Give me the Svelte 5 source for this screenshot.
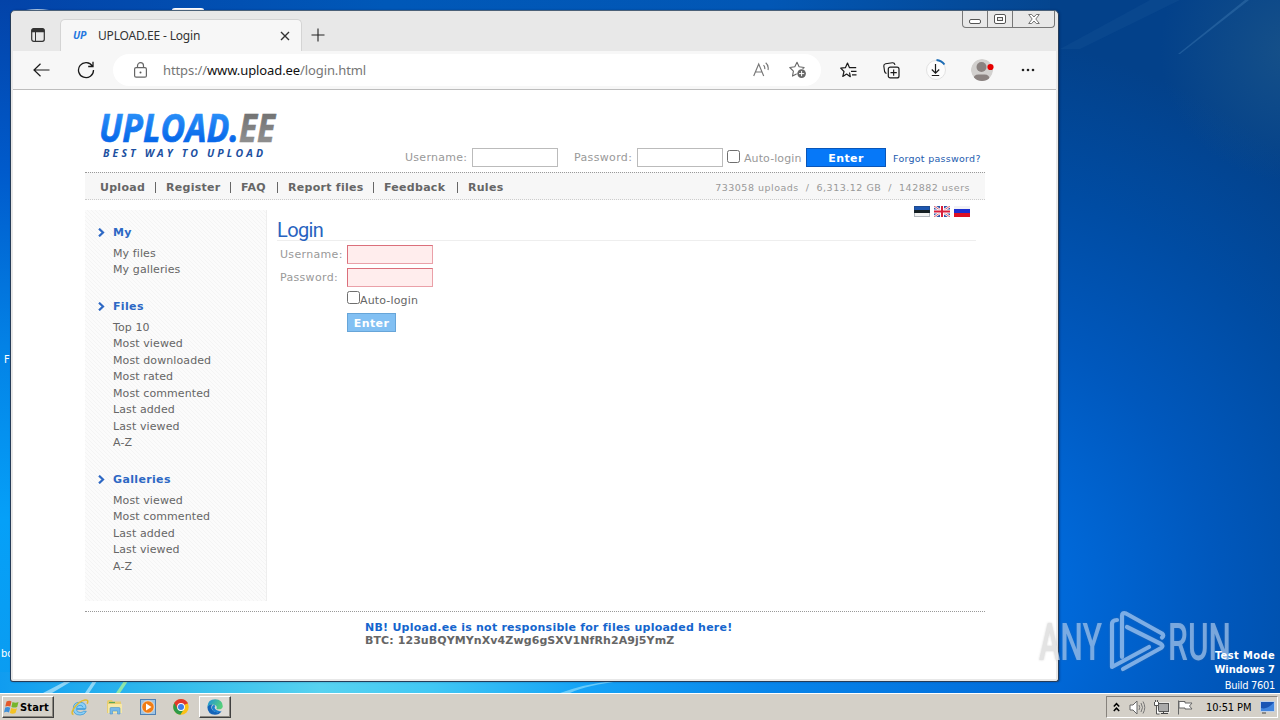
<script>
  const nav = [
    { label: 'Upload', w: 45 },
    { label: 'Register', w: 54 },
    { label: 'FAQ', w: 26 },
    { label: 'Report files', w: 75 },
    { label: 'Feedback', w: 63 },
    { label: 'Rules', w: 36 }
  ];
  const groups = [
    { title: 'My', items: ['My files', 'My galleries'] },
    {
      title: 'Files',
      items: ['Top 10', 'Most viewed', 'Most downloaded', 'Most rated', 'Most commented', 'Last added', 'Last viewed', 'A-Z']
    },
    { title: 'Galleries', items: ['Most viewed', 'Most commented', 'Last added', 'Last viewed', 'A-Z'] }
  ];
</script>

<div class="desktop">
  <svg class="wall" viewBox="0 0 1280 693" preserveAspectRatio="none">
    <defs>
      <linearGradient id="left" x1="0" y1="0" x2="0" y2="1">
        <stop offset="0" stop-color="#0343a8" /><stop offset=".25" stop-color="#005bcc" />
        <stop offset=".5" stop-color="#0382e6" /><stop offset=".75" stop-color="#05a0f8" /><stop offset="1" stop-color="#0b9cf0" />
      </linearGradient>
      <linearGradient id="top" x1="0" x2="1" y1="0" y2="0">
        <stop offset="0" stop-color="#0343a8" /><stop offset=".3" stop-color="#0058b8" />
        <stop offset=".6" stop-color="#0257b5" /><stop offset=".83" stop-color="#05458e" /><stop offset="1" stop-color="#114a85" />
      </linearGradient>
      <linearGradient id="bot" x1="0" x2="1" y1="0" y2="0">
        <stop offset="0" stop-color="#109cf0" /><stop offset=".17" stop-color="#35bdec" /><stop offset=".3" stop-color="#57d2f0" />
        <stop offset=".4" stop-color="#42c8f4" /><stop offset=".54" stop-color="#16a4f6" /><stop offset=".72" stop-color="#0885ea" />
        <stop offset="1" stop-color="#0068d8" />
      </linearGradient>
      <radialGradient id="right" gradientUnits="userSpaceOnUse" cx="930" cy="600" r="570">
        <stop offset="0" stop-color="#0078e4" /><stop offset=".25" stop-color="#0068d8" /><stop offset=".5" stop-color="#0058bd" />
        <stop offset=".75" stop-color="#004ca3" /><stop offset="1" stop-color="#03418a" />
      </radialGradient>
      <radialGradient id="haze" gradientUnits="userSpaceOnUse" cx="1290" cy="50" r="130">
        <stop offset="0" stop-color="#1c5588" stop-opacity=".75" /><stop offset="1" stop-color="#1c5588" stop-opacity="0" />
      </radialGradient>
    </defs>
    <rect width="1280" height="693" fill="url(#top)" />
    <rect width="20" height="693" fill="url(#left)" />
    <rect y="672" width="1070" height="21" fill="url(#bot)" />
    <rect x="1050" width="230" height="693" fill="url(#right)" />
    <rect x="1050" width="230" height="300" fill="url(#haze)" />
    <path d="M1178 54 1245 0h4l-69 54z" fill="#4b86bd" opacity=".35" />
    <path d="M1060 49 1150 0h30L1080 49z" fill="#4b86bd" opacity=".09" />
    <path d="M43 693 66 681h6L52 693zM85 693l8-12h4l-8 12z" fill="#d8f4fc" opacity=".6" />
    <path d="M116 693l8-12h4l-8 12z" fill="#9aeba0" opacity=".9" />
    <path d="M560 693q25-9 52-12h10q-35 4-52 12z" fill="#a0e4fb" opacity=".6" />
    <path d="M172 10q0-2 3-2h26q3 0 3 2z" fill="#fff" />
    <path d="M26 10q11-2 23 0z" fill="#b9d3ee" />
  </svg>
  <span class="dlabel d1">F</span>
  <span class="dlabel d2">bo</span>

  <div class="window">
    <div class="caption">
      <span><svg width="12" height="5"><rect x=".5" y=".5" width="11" height="4" rx="1.5" fill="#fff" stroke="#555" /></svg></span>
      <span><svg width="12" height="10"><rect x=".5" y=".5" width="11" height="9" rx="1.5" fill="#fff" stroke="#555" /><rect x="3.5" y="3.5" width="5" height="3" fill="#e8e8e8" stroke="#555" /></svg></span>
      <span class="wide"><svg width="12" height="10" viewBox="0 0 12 10"><path d="M.7.5h3L6 3 8.300.5h3L7.800 5l3.500 4.500h-3L6 7 3.700 9.500h-3L4.200 5z" fill="#fff" stroke="#666" stroke-width=".9" /></svg></span>
    </div>
    <div class="tabs">
      <svg class="tabicon" width="14" height="14" viewBox="0 0 14 14"><rect x=".7" y=".7" width="12.600" height="12.600" rx="2" fill="none" stroke="#333" stroke-width="1.200" /><path d="M.5 2.500Q.5.500 2.500.5h9q2 0 2 2v1.700H.5z" fill="#333" /><path d="M4.500 4v9" stroke="#333" /></svg>
      <div class="tab">
        <b>UP</b><span>UPLOAD.EE - Login</span>
        <svg width="10" height="10" viewBox="0 0 10 10"><path d="M1 1l8 8M9 1L1 9" stroke="#333" stroke-width="1.400" /></svg>
      </div>
      <svg class="plus" width="14" height="14"><path d="M7 .5v13M.5 7h13" stroke="#222" stroke-width="1.100" /></svg>
    </div>
    <div class="tools">
      <svg class="back" width="17" height="14" viewBox="0 0 17 14"><path d="M16.500 7H1M7.500.7 1 7l6.500 6.300" fill="none" stroke="#1a1a1a" stroke-width="1.200" /></svg>
      <svg class="reload" width="18" height="18" viewBox="0 0 18 18"><path d="M15.400 5.200A7.500 7.500 0 1 0 16.500 9M16 .8v4.700h-4.800" fill="none" stroke="#1a1a1a" stroke-width="1.300" /></svg>
      <div class="address">
        <svg width="13" height="16" viewBox="0 0 13 16"><rect x=".6" y="5.600" width="11.800" height="9.600" rx="1.500" fill="none" stroke="#666" stroke-width="1.200" /><path d="M3.500 5.500V3.700a3 3 0 0 1 6 0v1.800" fill="none" stroke="#666" stroke-width="1.200" /><circle cx="6.500" cy="10.400" r="1" fill="#555" /></svg>
        <div class="url"><span class="u1">https://</span><span class="u2">www.upload.ee</span><span class="u3">/login.html</span></div>
        <svg width="17" height="16" viewBox="0 0 17 16"><path d="M.7 14 5.700 2 10.700 14M2.400 10H9M10.500 3.200q1.700 1.600 1.200 4M12.700.8q3.300 2.800 2.300 7.200" fill="none" stroke="#777" stroke-width="1.150" /></svg>
        <svg class="addstar" width="18" height="18" viewBox="0 0 18 18"><path d="M8 1.300l2.100 4.500 5 .7-3.700 3.500.8 5L8 12.700l-4.500 2.400.9-5L.8 6.500l5-.7z" fill="none" stroke="#666" stroke-width="1.100" stroke-linejoin="round" /><circle cx="12.600" cy="12.600" r="5" fill="#fff" /><circle cx="12.600" cy="12.600" r="4.300" fill="#666" /><path d="M12.600 10v5.200M10 12.600h5.200" stroke="#fff" /></svg>
      </div>
      <svg class="fav" width="17" height="16" viewBox="0 0 17 16"><path d="M9.500 10.500l.8 4.200L6.600 12 2.800 14.400l1.200-4.900L.7 6.200l4.700-.5L7.500 1l2 4.700h6.700M11 9.300h5.500M12 12.800h4.500" fill="none" stroke="#1a1a1a" stroke-width="1.200" stroke-linejoin="round" /></svg>
      <svg class="coll" width="17" height="17" viewBox="0 0 17 17"><path d="M3.500 11.500Q2 11 1.600 9.500L.8 4Q.7 2 2.600 1.700L9.500.8q2-.1 2.500 2" fill="none" stroke="#1a1a1a" stroke-width="1.150" /><rect x="5.300" y="5.200" width="10.700" height="10.700" rx="2" fill="#f7f7f7" stroke="#1a1a1a" stroke-width="1.200" /><path d="M10.650 7.500v6.200M7.500 10.600h6.300" stroke="#1a1a1a" stroke-width="1.150" /></svg>
      <svg class="down" width="22" height="24" viewBox="0 0 22 24"><circle cx="11" cy="12" r="9.500" fill="#fcfcfc" stroke="#e2e2e2" /><path d="M11.500 2q5 .4 8 4.500" fill="none" stroke="#1c6cb5" stroke-width="1.900" /><path d="M10.500 6v9M6.800 11.500l3.700 3.700 3.700-3.700M6.800 17.500h7.400" fill="none" stroke="#1a1a1a" stroke-width="1.200" /></svg>
      <svg class="user" width="25" height="24" viewBox="0 0 25 24"><clipPath id="uc"><circle cx="12" cy="12" r="11" /></clipPath><g clip-path="url(#uc)"><circle cx="12" cy="12" r="11" fill="#d2d0ce" /><circle cx="11.500" cy="9" r="5" fill="#8a8280" /><path d="M3.500 24v-3q0-4.500 5-4.500h6q5 0 5 4.500v3z" fill="#8a8280" /></g><circle cx="20.500" cy="9" r="3.100" fill="#e60000" /></svg>
      <svg class="more" width="14" height="4"><circle cx="2" cy="2" r="1.300" fill="#222" /><circle cx="7" cy="2" r="1.300" fill="#222" /><circle cx="12" cy="2" r="1.300" fill="#222" /></svg>
    </div>

    <div class="page">
      <header>
        <svg class="logo" width="190" height="56" viewBox="0 0 190 56">
          <defs>
            <linearGradient id="lb" x1="0" x2="0" y1="0" y2="1"><stop offset=".2" stop-color="#2d93fa" /><stop offset=".75" stop-color="#0869ea" /></linearGradient>
            <linearGradient id="lg" x1="0" x2="0" y1="0" y2="1"><stop offset=".2" stop-color="#707070" /><stop offset=".75" stop-color="#8d8d8d" /></linearGradient>
          </defs>
          <text class="big" x="0" y="32" textLength="140" lengthAdjust="spacingAndGlyphs" fill="url(#lb)" stroke="url(#lb)">UPLOAD.</text>
          <text class="big" x="140" y="32" textLength="36" lengthAdjust="spacingAndGlyphs" fill="url(#lg)" stroke="url(#lg)">EE</text>
          <text class="slogan" x="4" y="46.500" textLength="160" fill="#1c50a0">BEST WAY TO UPLOAD</text>
        </svg>
        <form class="top">
          <label class="lu" for="tu">Username:</label><input id="tu" class="field" />
          <label class="lp" for="tp">Password:</label><input id="tp" class="field" type="password" />
          <input type="checkbox" id="ta" class="chk" /><label class="la" for="ta">Auto-login</label>
          <button type="button">Enter</button><span class="forgot">Forgot password?</span>
        </form>
      </header>
      <nav>
        {#each nav as n, i}
          {#if i}<i></i>{/if}<b style:width="{n.w}px">{n.label}</b>
        {/each}
        <span class="stats">733058 uploads&nbsp; /&nbsp; 6,313.12 GB&nbsp; /&nbsp; 142882 users</span>
      </nav>
      <div class="body">
        <aside>
          {#each groups as g}
            <section>
              <h3><svg width="7" height="9" viewBox="0 0 7 9"><path d="M1 .7 5 4.500 1 8.300" fill="none" stroke="#2d68c4" stroke-width="2.200" /></svg>{g.title}</h3>
              {#each g.items as item}<p>{item}</p>{/each}
            </section>
          {/each}
        </aside>
        <main>
          <div class="flags">
            <svg width="16" height="11"><rect width="16" height="11" fill="#1c56b0" /><rect y="4" width="16" height="4" fill="#141e22" /><rect y="7" width="16" height="4" fill="#f2f2f2" /><rect x=".5" y=".5" width="15" height="10" fill="none" stroke="#234" opacity=".3" /></svg>
            <svg width="16" height="11"><rect width="16" height="11" fill="#3455a8" /><path d="M0 0l16 11M16 0L0 11" stroke="#fff" stroke-width="2.400" /><path d="M0 0l16 11M16 0L0 11" stroke="#d33048" stroke-width=".8" /><path d="M8 0v11M0 5.500h16" stroke="#fff" stroke-width="4" /><path d="M8 0v11M0 5.500h16" stroke="#d81f3c" stroke-width="2" /></svg>
            <svg width="16" height="11"><rect width="16" height="11" fill="#f2f2f5" /><rect y="3" width="16" height="4.500" fill="#1c2fd0" /><rect y="7" width="16" height="4" fill="#dd1024" /></svg>
          </div>
          <h1>Login</h1>
          <form class="login">
            <label for="u">Username:</label><input class="field" id="u" />
            <label for="p">Password:</label><input class="field" id="p" type="password" />
            <div class="auto"><input type="checkbox" id="a" class="chk" /><label for="a">Auto-login</label></div>
            <button type="button">Enter</button>
          </form>
        </main>
      </div>
      <footer>
        <div class="nb">NB! Upload.ee is not responsible for files uploaded here!</div>
        <div class="btc">BTC: 123uBQYMYnXv4Zwg6gSXV1NfRh2A9j5YmZ</div>
      </footer>
    </div>
  </div>

  <svg class="mark" width="210" height="72" viewBox="0 0 210 72">
    <defs><linearGradient id="mk" gradientUnits="userSpaceOnUse" x1="0" x2="200" y1="0" y2="0"><stop offset=".12" stop-color="#e3e3e3" /><stop offset=".125" stop-color="#a9caf0" stop-opacity=".68" /><stop offset="1" stop-color="#a9caf0" stop-opacity=".68" /></linearGradient></defs>
    <text x="5" y="54" textLength="63" lengthAdjust="spacingAndGlyphs" fill="url(#mk)">ANY</text>
    <text x="134" y="54" textLength="63" lengthAdjust="spacingAndGlyphs" fill="url(#mk)">RUN</text>
    <g fill="none" stroke="#8fbbee" stroke-width="4.200" stroke-linejoin="round" stroke-linecap="round" opacity=".85">
      <path d="M83 14q-5 0-5 4.500V61L115 41" /><path d="M88 51V10q0-4 4-2.500l36 20q2.500 2 0 4" /><path d="M93 21l34 17q3 2 0 4L89 63" />
    </g>
  </svg>
  <div class="build"><b>Test Mode</b><b>Windows 7</b><span>Build 7601</span></div>

  <div class="taskbar">
    <div class="start">
      <svg width="15" height="15" viewBox="0 0 15 15"><path d="M2.500 1.500q3-1.500 5 0L6.300 6.500q-2.500-1.200-5 0z" fill="#e3592b" /><path d="M8.500 2q3 1.300 6 0l-1.300 5q-3 1.200-5.800 0z" fill="#76b52c" /><path d="M1.200 7.500q2.800-1.200 5 .2L5 12.500q-2.500-1.400-5 0z" fill="#3e8fd9" /><path d="M7.200 8q3 1.300 5.800.2L11.500 13q-3 1.300-5.600 0z" fill="#f4c224" /></svg>
      <b>Start</b>
    </div>
    <div class="quick">
      <svg width="18" height="17" viewBox="0 0 18 17"><path d="M14.500 10.500H5.300q.4 3 4 3 2.300 0 3-1.200h3q-1.600 3.700-6.200 3.700-6.800 0-6.800-6.500T9 3.300q6.300 0 6 6.200H5.400q.4-3.200 3.700-3.200 2.500 0 3 2.200" fill="#8dd0f6" stroke="#3d9ad9" stroke-width=".8" /><path d="M2.500 15.500Q-.5 15 2.800 9.500 8 2 14 1q4-.5 2.200 3.800" fill="none" stroke="#e0bb32" stroke-width="1.500" /></svg>
      <svg width="17" height="16" viewBox="0 0 17 16"><path d="M1 2.500l1-1.500h4l1 1.500h8V14H1z" fill="#e7cd71" /><path d="M2 5h14v9H2z" fill="#f7e8a6" /><path d="M3 3.500h6" stroke="#5ba857" stroke-width="1.200" /><path d="M4 15V9.500q0-1 1-1h8q1 0 1 1V15h-2.500v-3h-5v3z" fill="#77b8e8" stroke="#4d93c8" stroke-width=".6" /></svg>
      <svg width="16" height="16" viewBox="0 0 16 16"><rect x=".5" y=".5" width="15" height="15" fill="#9fc4e3" stroke="#4e80b4" /><circle cx="8" cy="8" r="6.200" fill="#f07d16" stroke="#fff" stroke-width=".6" /><path d="M6 4.500l5.500 3.500L6 11.500z" fill="#fff" /></svg>
      <svg width="16" height="16" viewBox="0 0 16 16"><circle cx="8" cy="8" r="7.700" fill="#fbc116" /><path d="M8 8 1.300 4A7.700 7.700 0 0 1 14.700 4z" fill="#e2382c" /><path d="M8 8 1.300 4a7.700 7.700 0 0 0 6 11.700L11.200 9.800z" fill="#2d9a48" /><path d="M1.300 4 4.700 9.900 8 4.500h6.900L14 3H2z" fill="#e2382c" /><circle cx="8" cy="8" r="3.900" fill="#fff" /><circle cx="8" cy="8" r="3" fill="#3f7ee8" /></svg>
    </div>
    <div class="active">
      <svg width="16" height="16" viewBox="0 0 17 17"><defs><linearGradient id="eg" x1="0" x2="1" y1="0" y2=".4"><stop offset="0" stop-color="#1d8fe0" /><stop offset="1" stop-color="#54cf7c" /></linearGradient></defs>
        <path d="M.4 8.500Q2 5 6 5.500 3.500 8 5.500 11.500q3 4 10 1.500Q13 16.800 8.500 16.800.6 16.300.4 8.500z" fill="#1464b9" />
        <path d="M.4 8Q1 .4 8.700.3q7.900.4 8.100 7.400-.3 3.300-4 3.300-3.300 0-2.600-1.300Q11 7 7.500 6 3.500 5 .4 8z" fill="url(#eg)" />
        <path d="M7.500 6Q5 6.500 5.200 9.500 6 14 11 14q3 0 4.700-1.500-3 .7-5.700-.7-3-2-1.200-4.300z" fill="#1b7fd0" /></svg>
    </div>
    <div class="tray">
      <svg width="7" height="11" viewBox="0 0 7 11"><path d="M.8 4.500 3.500 1.700 6.200 4.500M.8 9 3.500 6.200 6.200 9" fill="none" stroke="#000" stroke-width="1.500" /></svg>
      <svg class="vol" width="17" height="15" viewBox="0 0 17 15"><path d="M1 5h3l4-4v13l-4-4H1z" fill="#fff" stroke="#666" /><path d="M10 5q1.500 2.500 0 5M12 3q3 4.500 0 9M14 1.500q3.500 6 0 12" fill="none" stroke="#777" /></svg>
      <svg class="net" width="17" height="15" viewBox="0 0 17 15"><rect x="5.500" y="3.500" width="10" height="8" fill="#aaa" stroke="#555" /><rect x="4.500" y="2.500" width="12" height="10" fill="none" stroke="#fff" opacity=".5" /><path d="M8 13.500h7M10.500 11.500v2" stroke="#444" /><path d="M1.500 2v3.500h4V2M2.500 0v2M4.500 0v2M3.500 6v8h3" fill="#fff" stroke="#555" /></svg>
      <svg class="flag" width="17" height="15" viewBox="0 0 17 15"><path d="M1.500 14.500v-14M2 1.500h6v1.500h7l-2.500 3 2.500 3H8V8H2z" fill="#fff" stroke="#666" /></svg>
      <span>10:51 PM</span>
      <svg width="15" height="13" viewBox="0 0 15 13"><rect x=".5" y=".5" width="14" height="10" fill="#1a55b4" stroke="#bfd0e8" /><path d="M1 7Q8 9 14 1v9H1z" fill="#4386de" /><path d="M2 12h4" stroke="#444" /></svg>
    </div>
  </div>
</div>

<style>
  :global(body) { margin: 0; overflow: hidden; }
  .desktop { position: relative; width: 1280px; height: 720px; overflow: hidden; font-family: "DejaVu Sans", sans-serif; font-size: 11px; box-sizing: border-box; padding-top: 693px; }
  .desktop :global(*) { box-sizing: border-box; }
  svg { display: block; flex: none; }
  .wall { position: absolute; left: 0; top: 0; width: 1280px; height: 693px; }
  .dlabel { position: absolute; color: #fff; font: 11px/14px "DejaVu Sans Condensed", "DejaVu Sans", sans-serif; }
  .d1 { left: 4px; top: 353px; }
  .d2 { left: 1px; top: 647px; }

  .window { position: absolute; left: 10px; top: 10px; width: 1049px; height: 672px; border: 1px solid #263c58; border-top-color: #4b6178; border-radius: 5px 5px 3px 3px; background: #e8e8e8; padding: 1px 2px 2px 2px; display: flex; flex-direction: column; box-shadow: 1px 0 2px rgba(0, 20, 60, .35); }
  .caption { position: absolute; right: 3px; top: 0; display: flex; height: 17px; border: 1px solid #777; border-top: 0; border-radius: 0 0 4px 4px; }
  .caption span { width: 25px; display: flex; align-items: center; justify-content: center; border-right: 1px solid #777; }
  .caption span:first-child { padding-top: 5px; width: 25px; }
  .caption .wide { width: 41px; border: 0; }
  .tabs { height: 39px; display: flex; align-items: flex-start; flex: none; padding-left: 18px; }
  .tabicon { margin-top: 16px; }
  .tab { width: 242px; height: 33px; margin: 7px 0 0 15px; background: #f7f7f7; border: 1px solid #d4d4d4; border-bottom: 0; border-radius: 5px 5px 0 0; display: flex; align-items: center; padding: 0 11px 2px 12px; font: 12px "Noto Sans", sans-serif; color: #333; }
  .tab b { font: italic bold 10.5px "Open Sans", sans-serif; color: #2577e0; width: 25px; letter-spacing: -.3px; }
  .tab span { flex: 1; letter-spacing: -.18px; }
  .tab svg { margin-top: 2px; }
  .plus { margin: 16px 0 0 9px; }
  .tools { height: 39px; flex: none; background: #f7f7f7; border-bottom: 1px solid #bdbdbd; display: flex; align-items: center; padding-left: 20px; }
  .reload { margin-left: 27px; }
  .address { width: 708px; height: 32px; border-radius: 16px; background: #fff; margin-left: 18px; display: flex; align-items: center; padding: 0 14px 0 21px; }
  .url { flex: 1; padding-left: 16px; font: 13px "Noto Sans", sans-serif; color: #767676; letter-spacing: -.1px; }
  .u2 { color: #111; }
  .addstar { margin-left: 19px; }
  .fav { margin-left: 19px; }
  .coll { margin-left: 26px; }
  .down { margin-left: 25px; }
  .user { margin-left: 23px; }
  .more { margin-left: 26px; }

  .page { flex: 1; background: #fff; padding: 0 71px 0 72px; min-height: 0; }
  header { height: 82px; position: relative; }
  .logo { position: absolute; left: 14px; top: 20px; }
  .big { font: italic bold 39px "Open Sans", sans-serif; stroke-width: .7px; }
  .slogan { font: italic bold 10.5px "Open Sans", sans-serif; }
  form { margin: 0; }
  .top { height: 82px; padding: 58px 0 0 320px; display: flex; align-items: flex-start; color: #999; line-height: 20px; white-space: nowrap; }
  .lu { width: 67px; letter-spacing: .28px; }
  .lp { width: 63px; margin-left: 16px; letter-spacing: .35px; }
  .la { width: 62px; padding-top: 1px; letter-spacing: .1px; }
  .field { width: 86px; height: 19px; border: 1px solid #bbb; border-radius: 0; padding: 0; margin: 0; background: #fff; }
  .chk { appearance: none; width: 13px; height: 13px; border: 1px solid #6f6f6f; border-radius: 2.500px; background: #fff; margin: 0; }
  .top .chk { margin: 2px 4px 0; }
  button { font: bold 11px "DejaVu Sans", sans-serif; color: #fff; border: 1px solid #0a56b8; background: #0678f8; padding: 1px 0 0; height: 19px; letter-spacing: .4px; }
  .top button { width: 80px; }
  .forgot { color: #245caf; font-size: 9.500px; margin-left: 7px; padding-top: 1px; letter-spacing: .27px; }
  nav { height: 28px; background: #f7f7f7; border-top: 1px dotted #999; border-bottom: 1px dotted #ccc; display: flex; align-items: center; padding: 2px 15px 0; color: #666; white-space: nowrap; }
  nav i { width: 1px; height: 11px; background: #666; margin: 0 10px; }
  nav b { letter-spacing: .28px; }
  .stats { margin-left: auto; color: #999; font-size: 9.500px; letter-spacing: .5px; }
  .body { display: flex; height: 411px; padding-top: 10px; }
  aside { width: 182px; height: 391px; border-right: 1px solid #eee; background: repeating-linear-gradient(45deg, #f4f4f4 0 1px, #fbfbfb 1px 2.830px); padding: 12px 0 0 13px; }
  section { margin-bottom: 18.250px; }
  h3 { margin: 0 0 2.750px; height: 20px; display: flex; align-items: center; font-size: 11px; color: #2d68c4; letter-spacing: .35px; }
  h3 svg { margin-right: 8px; }
  p { margin: 0 0 0 15px; line-height: 16.500px; color: #666; letter-spacing: .1px; position: relative; top: .9px; }
  main { width: 699px; margin-left: 10px; }
  .flags { display: flex; gap: 4px; justify-content: flex-end; height: 11px; margin-top: -4px; padding-right: 6px; }
  h1 { margin: 0; height: 24px; border-bottom: 1px solid #eee; font: 20px/26px Roboto, sans-serif; color: #2863c0; letter-spacing: -.6px; }
  .login { display: grid; grid-template-columns: 67px 86px; row-gap: 4px; padding: 4px 0 0 3px; color: #999; line-height: 19px; letter-spacing: .32px; }
  .login .field { border-color: #db6f7b #eaa0a8 #eaa0a8 #db6f7b; background: #ffeded; }
  .auto { grid-column: 2; height: 18px; display: flex; color: #666; letter-spacing: .15px; }
  .auto label { white-space: nowrap; }
  .login button { grid-column: 2; width: 49px; background: #82c0f3; border-color: #67a5d8; }
  footer { border-top: 1px dotted #999; padding: 9px 0 0 280px; font-weight: bold; line-height: 13px; white-space: nowrap; }
  .nb { color: #1565cd; letter-spacing: .24px; }
  .btc { color: #666; letter-spacing: .09px; }

  .mark { position: absolute; left: 1034px; top: 606px; filter: drop-shadow(0 0 1px rgba(120, 120, 120, .3)); }
  .mark text { font: 500 52px Roboto, sans-serif; }
  .build { position: absolute; right: 5px; top: 649px; display: flex; flex-direction: column; align-items: flex-end; color: #fff; font: 11px/14px "DejaVu Sans Condensed", "DejaVu Sans", sans-serif; }
  .build b:first-child { letter-spacing: .4px; }
  .build span { line-height: 17px; letter-spacing: -.3px; }
  .taskbar { position: relative; height: 27px; background: #d4d0c8; border-top: 1px solid #fff; display: flex; padding: 2px 2px 2px; }
  .start, .active { height: 22px; border: 1px solid; border-color: #fff #404040 #404040 #fff; box-shadow: inset -1px -1px #8c8880; display: flex; align-items: center; }
  .start { width: 52px; padding-left: 1px; gap: 1px; font: 11px "DejaVu Sans Condensed", sans-serif; letter-spacing: .15px; }
  .quick { display: flex; align-items: center; gap: 17px; padding-left: 17px; height: 22px; }
  .active { width: 32px; margin-left: 10px; justify-content: center; background: #dedbd6; }
  .tray { margin-left: auto; width: 172px; height: 22px; border: 1px solid; border-color: #86827c #fff #fff #86827c; display: flex; align-items: center; padding-left: 6px; font: 11px "DejaVu Sans Condensed", sans-serif; }
  .vol { margin-left: 9px; }
  .net { margin-left: 7px; }
  .flag { margin-left: 7px; }
  .tray span { margin-left: 12px; width: 54px; letter-spacing: -.1px; white-space: nowrap; }
</style>
